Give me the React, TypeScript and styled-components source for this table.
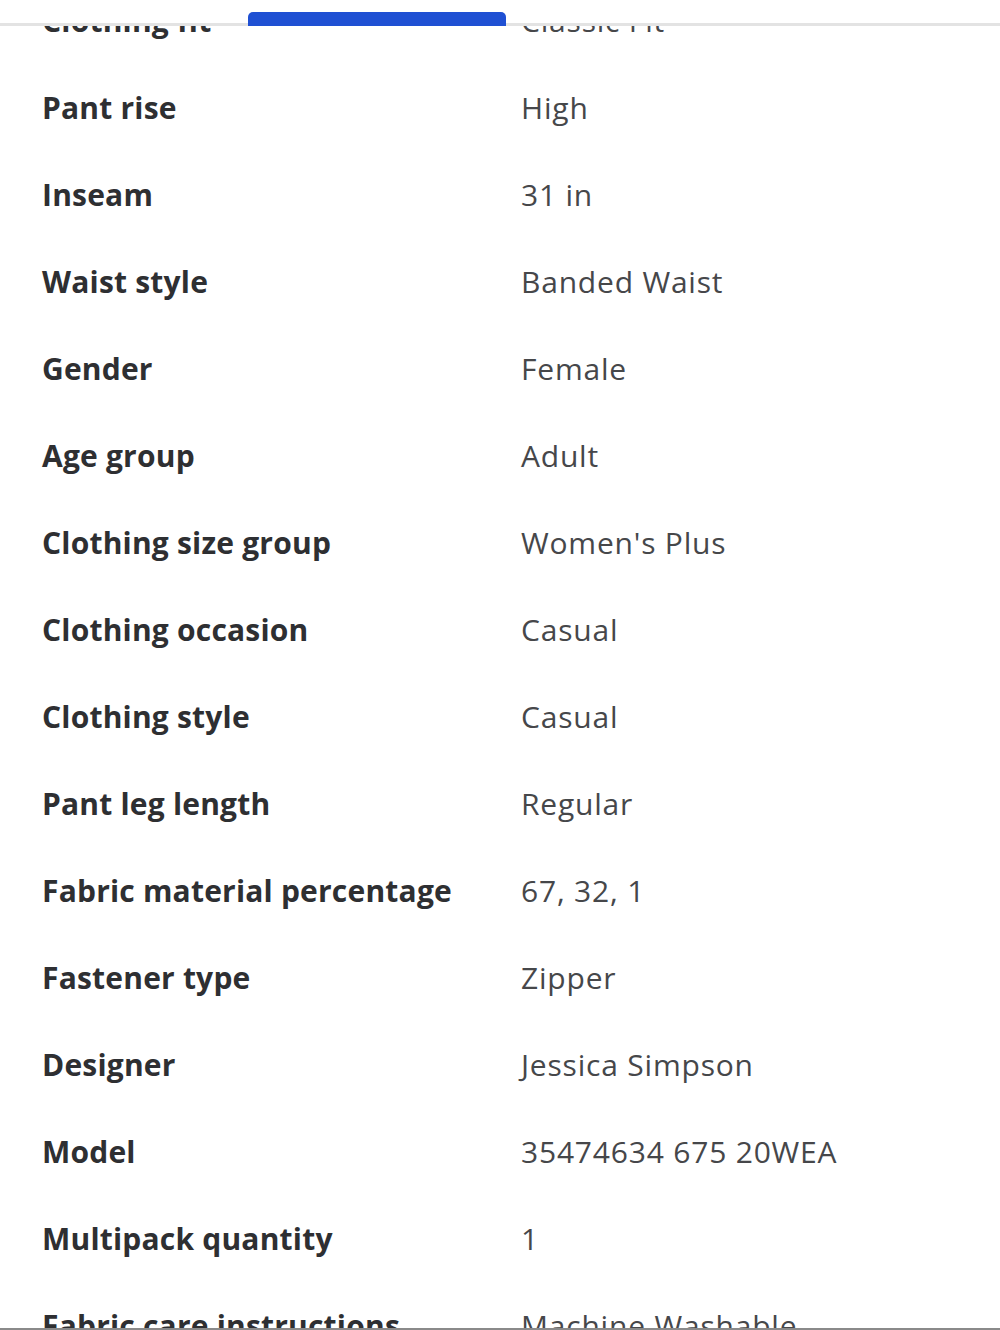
import React from "react";
import styled, { createGlobalStyle } from "styled-components";

const GlobalStyle = createGlobalStyle`
  html, body { margin: 0; padding: 0; background: #ffffff; }
  body { font-family: "Open Sans", Lato, sans-serif; overflow: hidden; }
`;

const Page = styled.div`
  position: relative;
  width: 1000px;
  height: 1330px;
  overflow: hidden;
  background: #ffffff;
`;

const TopBar = styled.div`
  position: absolute;
  top: 0;
  left: 0;
  right: 0;
  height: 23px;
  background: #ffffff;
  border-bottom: 3px solid #e3e3e3;
  z-index: 2;
`;

const ActiveTab = styled.div`
  position: absolute;
  left: 248px;
  bottom: -3px;
  width: 258px;
  height: 14px;
  background: #1f50d3;
  border-radius: 5px 5px 0 0;
`;

const SpecList = styled.dl`
  margin: -23px 0 0 0;
  padding: 0 0 0 42px;
`;

const SpecRow = styled.div`
  display: grid;
  grid-template-columns: 479px 1fr;
  align-items: center;
  height: 87px;
`;

const Label = styled.dt`
  margin: 0;
  font-family: "Open Sans", Lato, sans-serif;
  font-weight: 700;
  font-size: 30px;
  letter-spacing: 0.2px;
  color: #2e2f32;
  white-space: nowrap;
`;

const Value = styled.dd`
  margin: 0;
  font-family: "Open Sans", Lato, sans-serif;
  font-weight: 400;
  font-size: 30px;
  letter-spacing: 0.8px;
  color: #46474a;
  white-space: nowrap;
`;

const BottomEdge = styled.div`
  position: absolute;
  left: 0;
  right: 0;
  bottom: 0;
  height: 2px;
  background: #8a8a8a;
  z-index: 2;
`;

const specs: [string, string][] = [
  ["Clothing fit", "Classic Fit"],
  ["Pant rise", "High"],
  ["Inseam", "31 in"],
  ["Waist style", "Banded Waist"],
  ["Gender", "Female"],
  ["Age group", "Adult"],
  ["Clothing size group", "Women's Plus"],
  ["Clothing occasion", "Casual"],
  ["Clothing style", "Casual"],
  ["Pant leg length", "Regular"],
  ["Fabric material percentage", "67, 32, 1"],
  ["Fastener type", "Zipper"],
  ["Designer", "Jessica Simpson"],
  ["Model", "35474634 675 20WEA"],
  ["Multipack quantity", "1"],
  ["Fabric care instructions", "Machine Washable"],
];

export default function App() {
  return (
    <Page>
      <GlobalStyle />
      <TopBar>
        <ActiveTab />
      </TopBar>
      <SpecList>
        {specs.map(([label, value]) => (
          <SpecRow key={label}>
            <Label>{label}</Label>
            <Value>{value}</Value>
          </SpecRow>
        ))}
      </SpecList>
      <BottomEdge />
    </Page>
  );
}
